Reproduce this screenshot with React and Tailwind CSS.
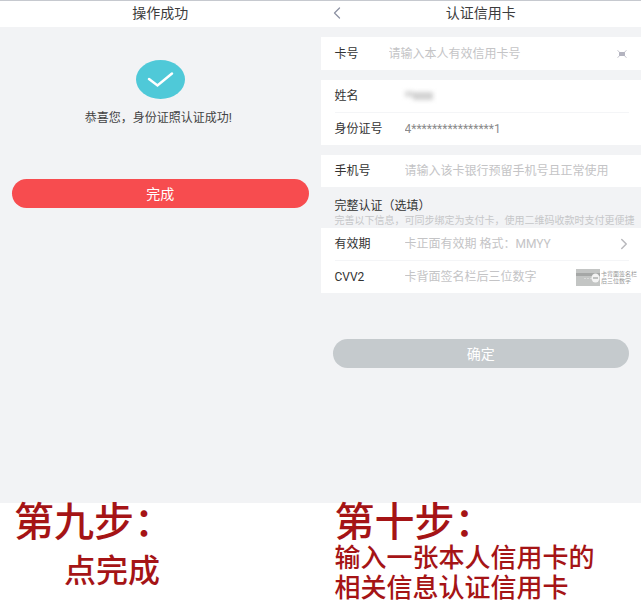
import { ChevronLeft, ChevronRight } from 'lucide-react';

function TopBar({ title, back }) {
  return (
    <header className="relative h-[27px] pb-0.5 border-t border-[#c6c9cf] bg-white flex items-center justify-center">
      {back && (
        <button aria-label="返回" className="absolute left-1.5 top-0.5">
          <ChevronLeft className="w-5 h-5 text-[#8d92a3]" strokeWidth={1.5} />
        </button>
      )}
      <h1 className="text-sm text-[#3c3c3c]">{title}</h1>
    </header>
  );
}

function Field({ id, label, short, divider, children }) {
  return (
    <div className="pl-3.5 pr-3">
      <div className={`flex items-center ${divider ? 'h-[33px] border-b border-[#f4f5f7]' : 'h-8'}`}>
        <label htmlFor={id} className={`shrink-0 text-xs text-[#333] ${short ? 'w-[54px]' : 'w-[70px]'}`}>
          {label}
        </label>
        {children}
      </div>
    </div>
  );
}

const inputClass = 'flex-1 min-w-0 bg-transparent outline-none text-xs text-[#8a8a8a] placeholder:text-[#c4c4c6]';

function ScanIcon() {
  return (
    <svg viewBox="0 0 10 8" className="w-2.5 h-2" fill="none" stroke="#c3c3cc">
      <rect x="2" y="2" width="6" height="4" fill="#b3b3bf" stroke="none" />
      <path d="M0.5 0.5L2.5 2M9.5 0.5L7.5 2M0.5 7.5L2.5 6M9.5 7.5L7.5 6" />
    </svg>
  );
}

function CardBackIcon() {
  return (
    <svg viewBox="0 0 24 17" className="w-6 h-[17px] shrink-0">
      <rect width="24" height="17" fill="#c3c5c4" />
      <rect y="4" width="24" height="3" fill="#a5a7a6" />
      <path d="M8 9.5h8" stroke="#d8d9d8" strokeDasharray="2 1" />
      <ellipse cx="19.5" cy="9" rx="4" ry="4.5" fill="#f3f3f3" />
      <path d="M17 9h5" stroke="#c0c2c1" strokeWidth="2" />
    </svg>
  );
}

function SuccessScreen() {
  return (
    <section className="bg-[#f2f3f5] pb-10">
      <TopBar title="操作成功" />
      <div className="pt-[33px] px-3 flex flex-col items-center">
        <svg viewBox="0 0 49 39" className="w-[49px] h-[39px]">
          <ellipse cx="24.5" cy="19.5" rx="24.5" ry="19.5" fill="#4fc9d8" />
          <path d="M13 19L21.5 25.5L36 13.5" fill="none" stroke="#fff" strokeWidth="2.5" strokeLinecap="round" />
        </svg>
        <p className="mt-2.5 text-xs leading-[18px] text-[#444] pr-1">恭喜您，身份证照认证成功!</p>
        <button className="mt-[52px] w-full h-[29px] rounded-full bg-[#f74c4f] text-white text-sm">完成</button>
      </div>
    </section>
  );
}

function CardForm() {
  return (
    <section className="bg-[#f2f3f5] pb-[135px]">
      <TopBar title="认证信用卡" back />
      <form>
        <div className="mt-2.5 pt-px bg-white">
          <Field id="card" label="卡号" short>
            <input id="card" className={inputClass} placeholder="请输入本人有效信用卡号" />
            <button type="button" aria-label="扫描" className="mr-0.5">
              <ScanIcon />
            </button>
          </Field>
        </div>

        <div className="mt-2.5 bg-white">
          <Field id="name" label="姓名" divider>
            <output id="name" className="flex items-center blur-[2px]">
              <span className="w-2 h-1.5 mb-1 bg-[#dadada]" />
              <span className="w-5 h-2 bg-[#d2d2d2]" />
            </output>
          </Field>
          <Field id="idno" label="身份证号">
            <input id="idno" className={inputClass} defaultValue="4****************1" readOnly />
          </Field>
        </div>

        <div className="mt-2.5 bg-white">
          <Field id="phone" label="手机号">
            <input id="phone" className={inputClass} placeholder="请输入该卡银行预留手机号且正常使用" />
          </Field>
        </div>

        <div className="pl-3.5 pt-2.5 pb-px">
          <h2 className="text-xs leading-[18px] text-[#333]">完整认证（选填）</h2>
          <p className="text-[10px] leading-3 text-[#c6c7c9] whitespace-nowrap">
            完善以下信息，可同步绑定为支付卡，使用二维码收款时支付更便捷
          </p>
        </div>

        <div className="bg-white">
          <Field id="expiry" label="有效期" divider>
            <input id="expiry" className={inputClass} placeholder="卡正面有效期 格式：MMYY" />
            <ChevronRight className="w-[18px] h-[18px] -mr-1 text-[#b9b9bd]" strokeWidth={2} />
          </Field>
          <div className="relative">
            <Field id="cvv" label="CVV2">
              <input id="cvv" className={inputClass} placeholder="卡背面签名栏后三位数字" />
            </Field>
            <div className="absolute right-1 inset-y-0 flex items-center gap-px">
              <CardBackIcon />
              <span className="text-[6px] leading-[7px] text-[#999]">
                卡背面签名栏
                <br />
                后三位数字
              </span>
            </div>
          </div>
        </div>

        <div className="px-3 mt-[46px]">
          <button type="button" className="w-full h-[29px] rounded-full bg-[#c5cacd] text-white text-sm">
            确定
          </button>
        </div>
      </form>
    </section>
  );
}

export default function App() {
  return (
    <main className="grid grid-cols-2 bg-white overflow-hidden font-[Roboto,'Noto_Sans_CJK_SC',sans-serif]">
      <SuccessScreen />
      <CardForm />
      <div className="pl-3.5 text-[#a51416] font-medium">
        <h2 className="text-[40px] leading-10">第九步：</h2>
        <p className="pl-[50px] mt-2 text-[32px] leading-10">点完成</p>
      </div>
      <div className="pl-3.5 text-[#a51416] font-medium">
        <h2 className="text-[40px] leading-10">第十步：</h2>
        <p className="text-[26px] leading-[30px] whitespace-nowrap">
          输入一张本人信用卡的
          <br />
          相关信息认证信用卡
        </p>
      </div>
    </main>
  );
}
